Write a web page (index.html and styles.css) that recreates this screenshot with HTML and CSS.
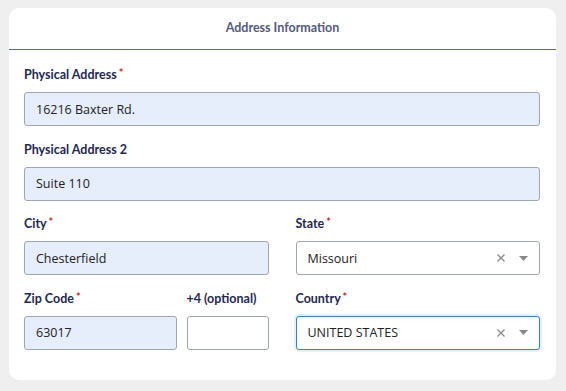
FILE: index.html
```html
<!DOCTYPE html>
<html>
<head>
<meta charset="utf-8">
<link rel="stylesheet" href="styles.css">
</head>
<body>
<div class="card">
  <div class="card-header">Address Information</div>
  <div class="card-body">
    <div class="field full">
      <label class="label">Physical Address <span class="req">*</span></label>
      <div class="input filled">16216 Baxter Rd.</div>
    </div>
    <div class="field full">
      <label class="label">Physical Address 2</label>
      <div class="input filled">Suite 110</div>
    </div>
    <div class="field">
      <label class="label">City <span class="req">*</span></label>
      <div class="input filled">Chesterfield</div>
    </div>
    <div class="field">
      <label class="label">State <span class="req">*</span></label>
      <div class="input select">
        <span class="value">Missouri</span>
        <svg class="clear" width="8" height="8" viewBox="0 0 8 8"><path d="M0.5 0.5L7.5 7.5M7.5 0.5L0.5 7.5" stroke="#8a8a8a" stroke-width="1.3"/></svg>
        <svg class="caret" width="9" height="5" viewBox="0 0 9 5"><path d="M0 0H9L4.5 5Z" fill="#8a8a8a"/></svg>
      </div>
    </div>
    <div class="field zip-wrap">
      <div class="zip-grid">
        <div class="sub">
          <label class="label">Zip Code <span class="req">*</span></label>
          <div class="input filled">63017</div>
        </div>
        <div class="sub">
          <label class="label">+4 (optional)</label>
          <div class="input"></div>
        </div>
      </div>
    </div>
    <div class="field">
      <label class="label">Country <span class="req">*</span></label>
      <div class="input select focused">
        <span class="value">UNITED STATES</span>
        <svg class="clear" width="8" height="8" viewBox="0 0 8 8"><path d="M0.5 0.5L7.5 7.5M7.5 0.5L0.5 7.5" stroke="#8a8a8a" stroke-width="1.3"/></svg>
        <svg class="caret" width="9" height="5" viewBox="0 0 9 5"><path d="M0 0H9L4.5 5Z" fill="#8a8a8a"/></svg>
      </div>
    </div>
  </div>
</div>
</body>
</html>
```
FILE: styles.css
```css
html, body {
  margin: 0;
  padding: 0;
  background: #efefef;
}
body {
  padding: 8px 10px 0 9px;
  font-family: Lato, "Liberation Sans", sans-serif;
}
.card {
  width: 547px;
  height: 372px;
  background: #ffffff;
  border-radius: 10px;
  box-sizing: border-box;
}
.card-header {
  height: 42px;
  box-sizing: border-box;
  border-bottom: 1px solid #5b6285;
  text-align: center;
  font-weight: 700;
  font-size: 12.5px;
  color: #525a7d;
  padding-top: 12px;
  line-height: 16px;
}
.card-body {
  padding: 16px 16px 0 15px;
  display: grid;
  grid-template-columns: 1fr 1fr;
  column-gap: 27px;
  row-gap: 14.67px;
}
.field.full {
  grid-column: 1 / 3;
}
.label {
  display: block;
  height: 16px;
  font-weight: 700;
  font-size: 12.5px;
  line-height: 18px;
  color: #1e2850;
  margin-bottom: 10px;
  white-space: nowrap;
}
.req {
  color: #c4302b;
  font-size: 11px;
  font-weight: 700;
  line-height: 0;
  vertical-align: 2px;
  margin-left: -1px;
}
.input {
  height: 34px;
  box-sizing: border-box;
  border: 1px solid #a0a5b4;
  border-radius: 3px;
  background: #fff;
  font-family: "Open Sans", "Noto Sans", sans-serif;
  font-size: 12.5px;
  color: #222;
  padding: 0 11px;
  display: flex;
  align-items: center;
}
.input.filled {
  background: #e6edfb;
}
.zip-grid {
  display: grid;
  grid-template-columns: 1fr 82px;
  column-gap: 10px;
}
.select .value {
  flex: 1;
}
.select .clear {
  margin-right: 14px;
}
.select .caret {
  margin-right: 0;
}
.select.focused {
  border-color: #3a78e6;
  box-shadow: 0 0 0 2px rgba(58, 120, 230, 0.12);
}
```
